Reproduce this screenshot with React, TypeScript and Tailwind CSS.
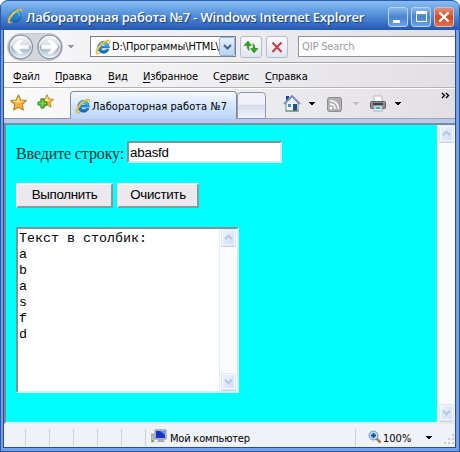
import React, { useId } from 'react';

const ui = "font-['DejaVu_Sans_Condensed','DejaVu_Sans',sans-serif] [font-stretch:condensed]";

function IELogo({ size }: { size: number }) {
  const id = useId();
  return (
    <svg width={size} height={size} viewBox="0 0 16 16" className="block shrink-0">
      <defs>
        <linearGradient id={id} x1="0" y1="0" x2="0" y2="1">
          <stop offset="0" stopColor="#5fd0fa" />
          <stop offset="0.5" stopColor="#279be4" />
          <stop offset="1" stopColor="#105fae" />
        </linearGradient>
      </defs>
      <path d="M8.6 2.4c3.4 0 5.6 2.4 5.6 6.6H6.1c.1 1.7 1.1 2.6 2.6 2.6 1.1 0 1.8-.4 2.2-1.1h3c-.8 2.4-2.7 3.7-5.3 3.7-3.5 0-5.8-2.4-5.8-5.9s2.4-5.9 5.8-5.9zM6.2 7.1h4.7c-.2-1.3-1-2.1-2.3-2.1s-2.2.8-2.4 2.1z" fill={`url(#${id})`} stroke="#1464ac" strokeWidth=".7" />
      <path d="M14.5 4.5C15.7 1.8 14.7.4 12 1.2 7 2.5.8 8.8.9 13.3c.1 2.6 2.5 2.2 4.7.7-2.3.9-3.2.3-3-1.300C3.100 9.400 8.300 3.700 12.400 2.400c1.700-.4 2.400.2 2.100 2.100z" fill="#f8cf45" stroke="#d9a326" strokeWidth=".5" />
    </svg>
  );
}

function NavArrow({ flip }: { flip?: boolean }) {
  return (
    <svg width="26" height="26" viewBox="0 0 26 26" className={flip ? '-scale-x-100' : ''}>
      <defs>
        <linearGradient id={flip ? 'fw' : 'bk'} x1="0" y1="0" x2="0" y2="1">
          <stop offset="0" stopColor="#f7f9fc" />
          <stop offset=".42" stopColor="#d5dce6" />
          <stop offset=".5" stopColor="#9eadc2" />
          <stop offset="1" stopColor="#e6f5fc" />
        </linearGradient>
      </defs>
      <circle cx="13" cy="13" r="12" fill={`url(#${flip ? 'fw' : 'bk'})`} stroke="#8c939d" strokeWidth="1.3" />
      <circle cx="13" cy="13" r="10.8" fill="none" stroke="#fff" strokeOpacity=".65" />
      <path d="M4.500 13L11 6.200h4L11 11.100H21v3.800H11l4 4.900h-4z" fill="#fff" stroke="#fff" strokeWidth=".4" />
    </svg>
  );
}

function Star({ size }: { size: number }) {
  return (
    <svg width={size} height={size} viewBox="0 0 16 16">
      <path d="M8 .8l2.200 4.800 5.200.6-3.800 3.600 1 5.300L8 12.500l-4.600 2.600 1-5.300L.6 6.200l5.200-.6z" fill="#fbb03b" stroke="#b98128" strokeLinejoin="round" />
      <path d="M8 2.500l1.500 4 4 .4-6 1.600-4.500-1.800 3.500-.3z" fill="#ffe58a" />
    </svg>
  );
}

function Down({ color = '#000', className = '' }: { color?: string; className?: string }) {
  return <svg width="6" height="4" viewBox="0 0 6 4" shapeRendering="crispEdges" className={`shrink-0 ${className}`}><path d="M0 0h6L3.500 3h-1z" fill={color} /></svg>;
}

function ScrollButton({ down }: { down?: boolean }) {
  return (
    <div className="flex h-[17px] w-[15px] shrink-0 items-center justify-center rounded-[2px] border border-[#dce5f6] bg-linear-to-br from-[#edf3ff] to-[#d0def7] shadow-[inset_0_0_0_1px_#f5f8ff,0_1px_0_#c5d3e3]">
      <svg width="9" height="7" viewBox="0 0 9 7" className={down ? 'rotate-180' : ''}>
        <path d="M1 5.300l3.500-3.500L8 5.300" fill="none" stroke="#b6c8df" strokeWidth="2.300" />
      </svg>
    </div>
  );
}

function ScrollBar({ className }: { className: string }) {
  return (
    <div className={`flex shrink-0 flex-col items-center justify-between border-l border-[#e5ecfa] bg-[#fafbff] pb-px ${className}`}>
      <ScrollButton />
      <ScrollButton down />
    </div>
  );
}

function TitleBar() {
  const btn = 'flex h-5 w-5 items-center justify-center rounded-[3px] border border-[#b9d4f5] bg-linear-to-b from-[#8cb9ed] via-[#4a83cf] to-[#6aa3e5]';
  return (
    <div className="flex h-[30px] items-center rounded-t-[7px] border-t border-[#305cae] bg-linear-to-b from-[#83baf0] from-5% via-[#5792dc] via-45% to-[#2557b2] pr-[5px] pl-[6px]">
      <IELogo size={16} />
      <span className="ml-[3px] grow pt-[2px] text-[13px] leading-4 font-semibold tracking-[-0.17px] whitespace-nowrap text-white font-['Open_Sans',sans-serif] [text-shadow:1px_1px_1px_#163b82]">Лабораторная работа №7 - Windows Internet Explorer</span>
      <div className="flex gap-[3px] pt-[2px]">
        <div className={btn}><svg width="16" height="16"><path d="M3 11h7v3H3z" fill="white" /></svg></div>
        <div className={btn}><svg width="16" height="16" shapeRendering="crispEdges"><path d="M3 2h11v11H3zM4 5v7h9V5z" fill="white" fillRule="evenodd" /></svg></div>
        <div className="flex h-5 w-5 items-center justify-center rounded-[3px] border border-[#e6b8b0] bg-linear-to-b from-[#e28e79] via-[#d04c29] to-[#e16f4b]"><svg width="14" height="14"><path d="M2.500 2.500l9 9m0-9l-9 9" stroke="white" strokeWidth="2.300" /></svg></div>
      </div>
    </div>
  );
}

function NavBar() {
  const btn = 'flex h-[22px] w-[22px] shrink-0 items-center justify-center rounded-[3px] border border-[#b8bac8] bg-linear-to-b from-[#fafafd] to-[#e2e6f3]';
  return (
    <div className="flex h-[33px] items-center border-b border-[#a3a3aa] bg-linear-to-r from-[#f8f8f9] to-[#e2e0e5] pt-px">
      <div className="ml-[3px] flex h-7 w-[56px] shrink-0 items-center gap-[3px] rounded-[14px] border border-[#c5c9d1] bg-[#d3d7dc]">
        <NavArrow />
        <NavArrow flip />
      </div>
      <Down color="#999ba0" className="ml-[5px]" />
      <div className="ml-[16px] flex h-[21px] w-[146px] shrink-0 items-center border border-[#777f8e] bg-white pl-[4px]">
        <IELogo size={16} />
        <span className={`${ui} ml-[1px] w-[106px] pt-[2px] text-[11px] tracking-[-0.1px] whitespace-nowrap`}>D:\Программы\HTML\</span>
        <div className="ml-px flex h-[19px] w-[17px] items-center justify-center rounded-[2px] border border-[#9db5d4] bg-linear-to-b from-[#e6f1ff] to-[#b8d2f3]"><svg width="9" height="6"><path d="M1 1l3.500 3.500L8 1" fill="none" stroke="#4c6185" strokeWidth="2" /></svg></div>
      </div>
      <div className={`${btn} ml-[4px]`}>
        <svg width="18" height="18" viewBox="0 0 18 18"><path d="M6 3L2 7.500h3c.1 2.500.8 3.800 2 5C6.800 10.500 6.800 9 7 7.500h2.500zM12 15l4-4.500h-3c-.1-2.500-.8-3.800-2-5 .2 2 .2 3.500 0 5H8.500z" fill="#35a51c" stroke="#27721b" strokeWidth=".5" /></svg>
      </div>
      <div className={`${btn} ml-[4px]`}>
        <svg width="14" height="14"><path d="M2.500 2.500l9 9.500m0-9.500l-9 9.500" stroke="#c5424b" strokeWidth="2.200" /></svg>
      </div>
      <div className={`${ui} ml-[10px] flex h-[21px] grow items-center border border-r-0 border-[#909097] bg-white pt-[2px] pl-[3px] text-[11px] tracking-[-0.15px] text-[#9a9a9e]`}>QIP Search</div>
    </div>
  );
}

const menu = [
  { before: '', key: 'Ф', rest: 'айл', w: 'w-[42px]' },
  { before: '', key: 'П', rest: 'равка', w: 'w-[53px]' },
  { before: '', key: 'В', rest: 'ид', w: 'w-[35px]' },
  { before: '', key: 'И', rest: 'збранное', w: 'w-[70px]' },
  { before: 'С', key: 'е', rest: 'рвис', w: 'w-[52px]' },
  { before: '', key: 'С', rest: 'правка', w: 'w-[60px]' },
];

function MenuBar() {
  return (
    <div className={`${ui} flex h-[25px] items-center border-t border-b border-t-white border-b-[#b4b3b9] bg-linear-to-r from-[#fafafa] to-[#e1dfe4] pt-[3px] pl-[9px] text-[11px] tracking-[-0.15px] whitespace-nowrap`}>
      {menu.map((m) => (
        <div key={m.rest} className={m.w}>
          {m.before}<u className="underline-offset-2">{m.key}</u>{m.rest}
        </div>
      ))}
    </div>
  );
}

function TabBar() {
  return (
    <div className="flex h-[31px] items-end bg-linear-to-r from-[#fbfbfb] to-[#e2e0e5] shadow-[inset_0_1px_0_#ffffff]">
      <div className="flex h-full w-[66px] shrink-0 items-center gap-[10px] border-b border-[#9295a3] pb-[2px] pl-[6px]">
        <Star size={17} />
        <div className="relative h-[17px] w-[17px]">
          <div className="ml-[3px]"><Star size={14} /></div>
          <svg width="11" height="11" className="absolute top-[4px] left-0"><path d="M4 1h3v3h3v3H7v3H4V7H1V4h3z" fill="#72d64d" stroke="#238020" /></svg>
        </div>
      </div>
      <div className={`${ui} flex h-[28px] w-[167px] shrink-0 items-center rounded-t-[4px] border border-b-0 border-[#868b9c] bg-linear-to-b from-[#f5f9ff] via-[#dceaff] via-40% to-[#bad5f8] pl-[4px] text-[11px] whitespace-nowrap`}>
        <IELogo size={16} />
        <span className="ml-[1px] pt-[3px] tracking-[0.06px]">Лабораторная работа №7</span>
      </div>
      <div className="h-[27px] w-[29px] shrink-0 rounded-t-[4px] border border-[#9296a6] bg-linear-to-b from-[#f0f1f9] from-45% via-[#d8dceb] via-50% to-[#eef3ff]" />
      <div className="flex h-full grow border-b border-[#a1a2ad] pt-[7px] pl-[17px]">
        <svg width="18" height="18" viewBox="0 0 18 18"><path d="M3 8l6-6 6 6v8H3z" fill="#edf1f9" stroke="#7e899f" /><path d="M3 1h3v3L3 7z" fill="#2541a5" /><path d="M1 9l8-8 8 8" fill="none" stroke="#7992bd" strokeWidth="1.800" /><path d="M10 9h4v7h-4z" fill="#254f87" /><path d="M5 9h3v3H5z" fill="#3d93cc" /><path d="M2 16h14" stroke="#6a9d58" /></svg>
        <Down className="mt-[7px] ml-[8px]" />
        <svg width="15" height="15" viewBox="0 0 15 15" className="mt-[2px] ml-[12px]"><rect x=".5" y=".5" width="14" height="14" rx="2" fill="#b0b0b2" stroke="#8d8d91" /><circle cx="4" cy="11" r="1.400" fill="white" /><path d="M3 7c3 0 5 2 5 5M3 3.500c5 0 8.500 3.500 8.500 8.500" fill="none" stroke="white" strokeWidth="1.500" /></svg>
        <Down color="#c0bec2" className="mt-[7px] ml-[11px]" />
        <svg width="18" height="18" viewBox="0 0 18 18" className="ml-[10px]"><path d="M5 1h8v7H5z" fill="#fff" stroke="#b5b7bc" /><rect x="1.500" y="6.500" width="15" height="7" rx="1" fill="#8c8e94" stroke="#5d5f64" /><path d="M4 8h10v2H4z" fill="#3e4044" /><path d="M5 11h8v5H5z" fill="#f8feff" stroke="#a1aaaf" /><path d="M6.500 13h5" stroke="#39afd0" strokeWidth="2" /></svg>
        <Down className="mt-[7px] ml-[8px]" />
        <svg width="9" height="7" className="-mt-[3px] ml-[40px] shrink-0"><path d="M1 1l2.500 2.500L1 6m4-5l2.500 2.500L5 6" fill="none" stroke="black" strokeWidth="1.400" /></svg>
      </div>
    </div>
  );
}

const sunken = 'border-2 border-t-[#7c9498] border-l-[#7c9498] border-r-[#d8eff1] border-b-[#d8eff1] bg-white';
const raised = "h-[25px] border-t-2 border-l-2 border-r-2 border-b-2 border-t-[#f9fafa] border-l-[#f9fafa] border-r-[#819da0] border-b-[#819da0] bg-[#ebe9ed] text-center font-['Liberation_Sans',sans-serif] text-[13.33px] leading-[20px] tracking-[-0.3px]";

function Page() {
  return (
    <div className="flex h-[301px] border-t-2 border-b-2 border-l-2 border-t-[#788f9f] border-b-[#e6ebee] border-l-[#7d8791] bg-[#00ffff]">
      <div className="flex grow flex-col items-start pt-[16px] pl-[10px]">
        <div className="flex h-[22px] items-center">
          <span className="w-[111px] pt-[4px] font-['Liberation_Serif',serif] text-[16px] leading-5 tracking-[-0.12px] whitespace-nowrap text-[#142b2b]">Введите строку:</span>
          <div className={`${sunken} h-[22px] w-[155px] pl-px font-['Liberation_Sans',sans-serif] text-[13.33px] leading-[19px] tracking-[-0.2px]`}>abasfd</div>
        </div>
        <div className="mt-[20px] flex gap-[4px]">
          <div className={`${raised} w-[97px]`}>Выполнить</div>
          <div className={`${raised} w-[82px]`}>Очистить</div>
        </div>
        <div className={`${sunken} mt-[19px] flex h-[166px] w-[223px]`}>
          <div className="grow pt-[2px] pl-[1px] font-['Liberation_Mono',monospace] text-[13.33px] leading-4 whitespace-pre">{'Текст в столбик:\na\nb\na\ns\nf\nd'}</div>
          <ScrollBar className="w-[18px]" />
        </div>
      </div>
      <ScrollBar className="w-[18px]" />
    </div>
  );
}

function StatusBar() {
  return (
    <div className={`${ui} flex h-[23px] items-center bg-[#eff2f7] pt-[3px] pl-[21px] text-[11px] whitespace-nowrap`}>
      {[0, 1, 2, 3, 4].map((n) => <div key={n} className="h-[17px] w-[24px] shrink-0 border-l border-[#cfd0d3]" />)}
      <div className="flex h-[17px] w-[210px] shrink-0 items-center border-l border-[#cfd0d3] pl-[5px]">
        <svg width="16" height="16" viewBox="0 0 16 16"><path d="M0 5h3v8H0z" fill="#bdc2c5" stroke="#707578" strokeWidth=".5" /><path d="M1 11h1v1H1z" fill="#2fae2e" /><path d="M4 1h11v9H4z" fill="#dee1e7" stroke="#7e858e" /><path d="M5 2h9v7H5z" fill="#1635c7" /><path d="M9 2h5v4z" fill="#5a91f1" /><path d="M8 10h4l2 3H6z" fill="#a5abb1" /></svg>
        <span className="ml-[3px] pt-[4px] tracking-[-0.2px]">Мой компьютер</span>
      </div>
      <div className="flex h-[17px] grow items-center border-l border-[#cfd0d3] pl-[12px]">
        <svg width="14" height="14" viewBox="0 0 14 14"><path d="M8 8l4.500 4.500" stroke="#b0744c" strokeWidth="2.500" /><circle cx="5.500" cy="5.500" r="4.500" fill="#b9dcf8" stroke="#6b99c4" /><path d="M5.500 3v5M3 5.500h5" stroke="#174ba0" strokeWidth="1.800" /></svg>
        <span className="ml-px pt-[4px]">100%</span>
        <Down className="mt-px ml-[15px]" />
        <svg width="11" height="11" className="mt-[5px] ml-auto"><path d="M8 0h2v2H8zM4 4h2v2H4zm4 0h2v2H8zM0 8h2v2H0zm4 0h2v2H4zm4 0h2v2H8z" fill="#cbccd0" /></svg>
      </div>
    </div>
  );
}

export default function App() {
  return (
    <main className="h-[452px] w-[460px] overflow-hidden rounded-t-[8px] bg-linear-to-r from-[#294d9e] via-[#6d9ae5] to-[#294d9e] text-black">
      <div className="h-full border-x border-b border-[#3156a0] bg-[#6f9fe8]">
        <TitleBar />
        <div className="mr-[3px] ml-[2px] border-x border-b border-[#2c4b9c]">
          <NavBar />
          <MenuBar />
          <TabBar />
          <div className="h-[4px] bg-[#b8c9ed]" />
          <Page />
          <StatusBar />
        </div>
      </div>
    </main>
  );
}
